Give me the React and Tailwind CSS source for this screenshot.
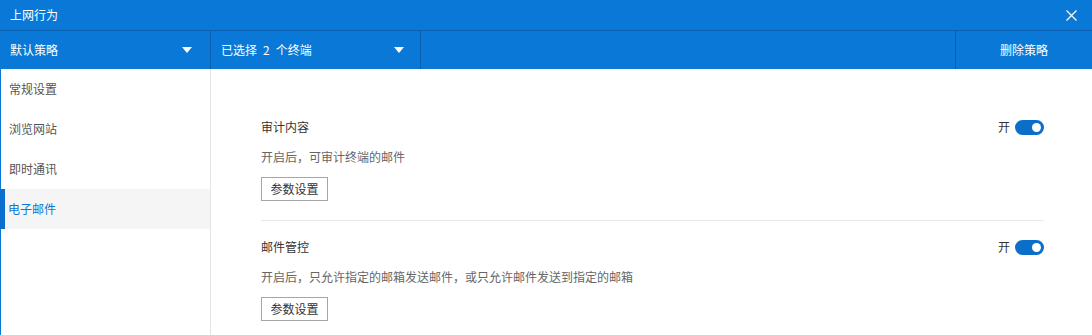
import React, { useState } from 'react';

const font = { fontFamily: '"Noto Sans CJK SC", "Liberation Sans", sans-serif' };

const menu = ['常规设置', '浏览网站', '即时通讯', '电子邮件'];

const sections = [
  { title: '审计内容', desc: '开启后，可审计终端的邮件' },
  { title: '邮件管控', desc: '开启后，只允许指定的邮箱发送邮件，或只允许邮件发送到指定的邮箱' },
];

const Caret = () => (
  <svg width="10" height="6" viewBox="0 0 10 6" className="fill-white">
    <path d="M0 0h10L5 6z" />
  </svg>
);

const Toggle = ({ on, onClick }) => (
  <div className="flex items-center gap-[5px]">
    <span className="text-[12px] text-[#333]">{on ? '开' : '关'}</span>
    <button
      onClick={onClick}
      className={`w-[29px] h-[15px] rounded-full flex items-center px-[3px] ${on ? 'bg-[#0b6fc9] justify-end' : 'bg-[#bbb] justify-start'}`}
    >
      <span className="w-[9px] h-[9px] rounded-full bg-white" />
    </button>
  </div>
);

export default function App() {
  const [active, setActive] = useState(3);
  const [toggles, setToggles] = useState([true, true]);

  return (
    <div className="w-[1092px] h-[335px] bg-white flex flex-col overflow-hidden" style={font}>
      {/* title bar */}
      <div className="h-[30px] bg-[#0a78d6] flex items-center justify-between px-[10px] text-white text-[12px] border-b border-[#0a5fae] box-content">
        <span>上网行为</span>
        <svg width="11" height="11" viewBox="0 0 11 11" className="mr-[5px] stroke-white" strokeWidth="1.2">
          <path d="M0.5 0.5l10 10M10.5 0.5l-10 10" />
        </svg>
      </div>

      {/* toolbar */}
      <div className="h-[38px] bg-[#0a78d6] flex text-white text-[12px]">
        <div className="w-[211px] flex items-center justify-between pl-[10px] pr-[18px] border-r border-[#0a5fae]">
          <span>默认策略</span>
          <Caret />
        </div>
        <div className="w-[210px] flex items-center justify-between pl-[10px] pr-[16px] border-r border-[#0a5fae]">
          <span>
            已选择<span className="mx-[6px]">2</span>个终端
          </span>
          <Caret />
        </div>
        <div className="flex-1 border-r border-[#0a5fae]" />
        <button className="w-[136px] flex items-center justify-center">删除策略</button>
      </div>

      <div className="flex flex-1">
        {/* sidebar */}
        <div className="w-[211px] border-l border-[#0a78d6] border-r border-r-[#e3e3e3] flex flex-col">
          {menu.map((m, i) => (
            <button
              key={m}
              onClick={() => setActive(i)}
              className={`h-[40px] flex items-center text-[12px] text-left ${
                i === active
                  ? 'bg-[#f5f5f5] text-[#0a78d6] border-l-[5px] border-[#0a6fcc] pl-[3px] -ml-px'
                  : 'text-[#555] pl-[8px]'
              }`}
            >
              {m}
            </button>
          ))}
        </div>

        {/* content */}
        <div className="flex-1 pl-[50px] pr-[48px] pt-[48px]">
          {sections.map((s, i) => (
            <div key={s.title} className={i === 0 ? 'pb-[19px] border-b border-[#e8e8e8]' : 'pt-[16px]'}>
              <div className="flex items-center justify-between h-[20px]">
                <span className="text-[12px] text-[#333]">{s.title}</span>
                <Toggle
                  on={toggles[i]}
                  onClick={() => setToggles(toggles.map((t, j) => (j === i ? !t : t)))}
                />
              </div>
              <p className="text-[12px] text-[#666] mt-[10px] leading-[20px]">{s.desc}</p>
              <button className="mt-[10px] w-[67px] h-[24px] border border-[#a6a6a6] text-[12px] text-[#333] bg-white">
                参数设置
              </button>
            </div>
          ))}
        </div>
      </div>
    </div>
  );
}
